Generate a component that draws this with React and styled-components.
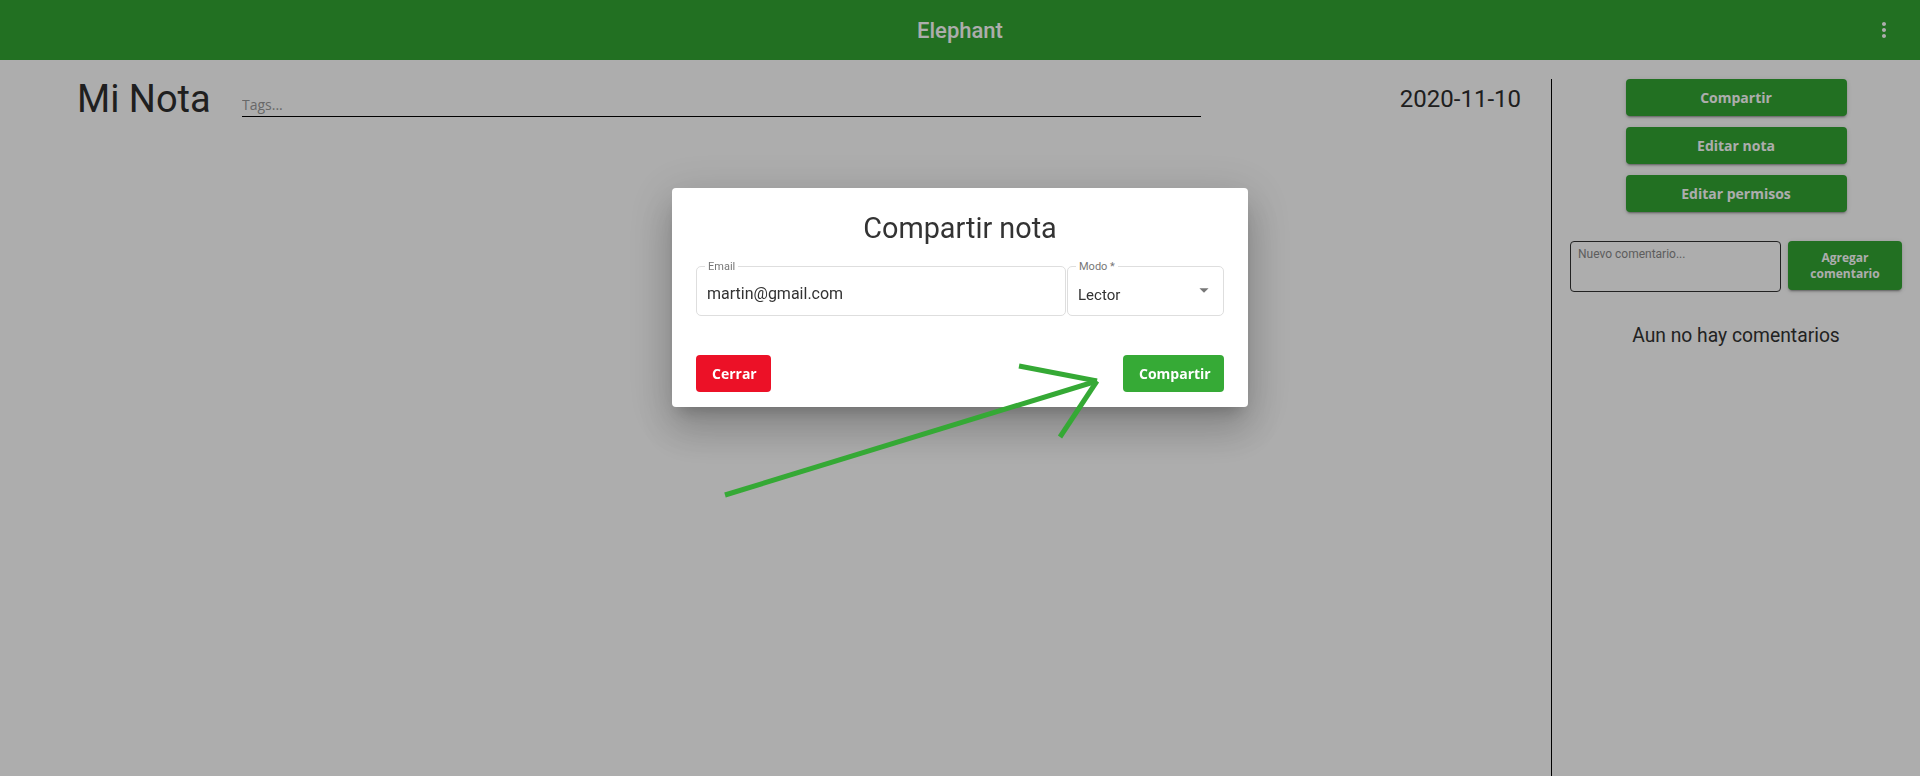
import styled, { createGlobalStyle } from "styled-components";

const GlobalStyle = createGlobalStyle`
  html, body {
    margin: 0;
    padding: 0;
    background: #ffffff;
    font-family: Roboto, "Liberation Sans", sans-serif;
    color: #333;
  }
  * { box-sizing: border-box; }
`;

const Page = styled.div`
  position: relative;
  width: 1920px;
  height: 776px;
  overflow: hidden;
  display: flex;
  flex-direction: column;
`;

const Header = styled.header`
  height: 60px;
  flex: none;
  background: #33a533;
  display: grid;
  grid-template-columns: 1fr auto 1fr;
  align-items: center;
  padding: 0 24px;
`;

const Brand = styled.h1`
  grid-column: 2;
  margin: 0;
  font-size: 22px;
  font-weight: 500;
  color: #fff;
  line-height: 26px;
  padding-top: 2px;
`;

const IconButton = styled.button`
  justify-self: end;
  width: 24px;
  height: 24px;
  padding: 0;
  border: 0;
  background: none;
  color: #fff;
  display: flex;
  margin-top: -1px;
`;

const Main = styled.main`
  flex: 1;
  display: flex;
  padding-top: 19px;
`;

const NoteArea = styled.section`
  flex: 1;
  padding: 0 30px 0 77px;
`;

const NoteHead = styled.div`
  display: flex;
  align-items: flex-start;
`;

const NoteTitle = styled.h2`
  margin: 0;
  font-size: 38px;
  line-height: 40px;
  font-weight: 400;
  color: #2e2e2e;
  width: 165px;
  flex: none;
`;

const TagsInput = styled.input`
  width: 959px;
  height: 24px;
  margin-top: 14px;
  border: 0;
  border-bottom: 1.5px solid #000;
  background: transparent;
  padding: 0;
  font-family: "Open Sans", sans-serif;
  font-size: 14px;
  outline: none;
  &::placeholder { color: #9a9a9a; }
`;

const NoteDate = styled.div`
  margin-left: auto;
  margin-top: 8px;
  font-size: 24px;
  line-height: 24px;
  color: #2e2e2e;
`;

const Sidebar = styled.aside`
  width: 369px;
  flex: none;
  border-left: 1px solid #000;
  display: flex;
  flex-direction: column;
  align-items: center;
`;

const ActionButton = styled.button`
  width: ${(p) => p.$w || 221}px;
  height: ${(p) => p.$h || 37}px;
  border: 0;
  border-radius: 4px;
  background: ${(p) => p.$bg || "#33a533"};
  color: #fff;
  font-family: "Open Sans", sans-serif;
  font-weight: 700;
  font-size: ${(p) => p.$fs || 14}px;
  line-height: 16px;
  padding: 0 ${(p) => p.$px || 8}px;
  box-shadow: ${(p) =>
    p.$flat
      ? "none"
      : "0px 3px 1px -2px rgba(0,0,0,0.2), 0px 2px 2px 0px rgba(0,0,0,0.14), 0px 1px 5px 0px rgba(0,0,0,0.12)"};
  cursor: pointer;
`;

const ButtonStack = styled.div`
  display: flex;
  flex-direction: column;
  gap: 11px;
`;

const CommentRow = styled.div`
  display: flex;
  align-items: flex-start;
  gap: 7px;
  margin-top: 29px;
`;

const CommentBox = styled.textarea`
  width: 211px;
  height: 51px;
  border: 1px solid #333;
  border-radius: 4px;
  resize: none;
  padding: 5px 7px;
  font-family: Roboto, sans-serif;
  font-size: 12px;
  background: #fff;
  &::placeholder { color: #8a8a8a; }
`;

const EmptyText = styled.p`
  margin: 32px 0 0;
  font-size: 19.3px;
  line-height: 24px;
  color: #333;
`;

const Backdrop = styled.div`
  position: fixed;
  inset: 0;
  background: rgba(0, 0, 0, 0.32);
  display: flex;
  justify-content: center;
  align-items: flex-start;
  padding-top: 188px;
`;

const Dialog = styled.div`
  width: 576px;
  background: #fff;
  border-radius: 4px;
  padding: 23px 24px 15px;
  box-shadow: 0px 11px 15px -7px rgba(0,0,0,0.2), 0px 24px 38px 3px rgba(0,0,0,0.14), 0px 9px 46px 8px rgba(0,0,0,0.12);
`;

const DialogTitle = styled.h3`
  margin: 0;
  text-align: center;
  font-size: 28.8px;
  line-height: 34px;
  font-weight: 400;
  color: #333;
`;

const FieldRow = styled.div`
  display: flex;
  gap: 1px;
  margin-top: 21px;
`;

const Field = styled.div`
  position: relative;
  width: ${(p) => p.$w}px;
  height: 50px;
  border: 1px solid #dedede;
  border-radius: 5px;
  display: flex;
  align-items: flex-start;
  padding: 18px 0 0 10px;
`;

const FieldLabel = styled.span`
  position: absolute;
  top: -7px;
  left: 8px;
  padding: 0 3px;
  background: #fff;
  font-size: 11px;
  line-height: 13px;
  color: #777;
`;

const FieldValue = styled.div`
  flex: 1;
  font-size: ${(p) => p.$fs || 16}px;
  line-height: 18px;
  color: #333;
  padding-top: ${(p) => p.$pt || 0}px;
`;

const DropIcon = styled.svg`
  width: 22px;
  height: 22px;
  margin: -6px 8px 0 0;
  fill: #777;
`;

const DialogActions = styled.div`
  display: flex;
  justify-content: space-between;
  margin-top: 39px;
`;

const Annotation = styled.svg`
  position: absolute;
  inset: 0;
  pointer-events: none;
`;

export default function App() {
  return (
    <Page>
      <GlobalStyle />
      <Header>
        <Brand>Elephant</Brand>
        <IconButton aria-label="menu">
          <svg width="24" height="24" viewBox="0 0 24 24" fill="currentColor">
            <path d="M12 8c1.1 0 2-.9 2-2s-.9-2-2-2-2 .9-2 2 .9 2 2 2zm0 2c-1.1 0-2 .9-2 2s.9 2 2 2 2-.9 2-2-.9-2-2-2zm0 6c-1.1 0-2 .9-2 2s.9 2 2 2 2-.9 2-2-.9-2-2-2z" />
          </svg>
        </IconButton>
      </Header>
      <Main>
        <NoteArea>
          <NoteHead>
            <NoteTitle>Mi Nota</NoteTitle>
            <TagsInput placeholder="Tags..." />
            <NoteDate>2020-11-10</NoteDate>
          </NoteHead>
        </NoteArea>
        <Sidebar>
          <ButtonStack>
            <ActionButton>Compartir</ActionButton>
            <ActionButton>Editar nota</ActionButton>
            <ActionButton>Editar permisos</ActionButton>
          </ButtonStack>
          <CommentRow>
            <CommentBox placeholder="Nuevo comentario..." />
            <ActionButton $w={114} $h={49} $fs={12}>
              Agregar comentario
            </ActionButton>
          </CommentRow>
          <EmptyText>Aun no hay comentarios</EmptyText>
        </Sidebar>
      </Main>
      <Backdrop>
        <Dialog>
          <DialogTitle>Compartir nota</DialogTitle>
          <FieldRow>
            <Field $w={370}>
              <FieldLabel>Email</FieldLabel>
              <FieldValue>martin@gmail.com</FieldValue>
            </Field>
            <Field $w={157}>
              <FieldLabel>Modo *</FieldLabel>
              <FieldValue $fs={15} $pt={1}>Lector</FieldValue>
              <DropIcon viewBox="0 0 24 24">
                <path d="M7 10l5 5 5-5z" />
              </DropIcon>
            </Field>
          </FieldRow>
          <DialogActions>
            <ActionButton $w={75} $bg="#ec1127" $px={16} $flat>
              Cerrar
            </ActionButton>
            <ActionButton $w={101} $bg="#36aa36" $px={16} $flat>
              Compartir
            </ActionButton>
          </DialogActions>
        </Dialog>
      </Backdrop>
      <Annotation width="1920" height="776" viewBox="0 0 1920 776">
        <g stroke="#35a935" strokeWidth="5" fill="none">
          <line x1="725" y1="495" x2="1097" y2="381" />
          <line x1="1019" y1="366" x2="1097" y2="381" />
          <line x1="1060" y1="437" x2="1097" y2="381" />
        </g>
      </Annotation>
    </Page>
  );
}
